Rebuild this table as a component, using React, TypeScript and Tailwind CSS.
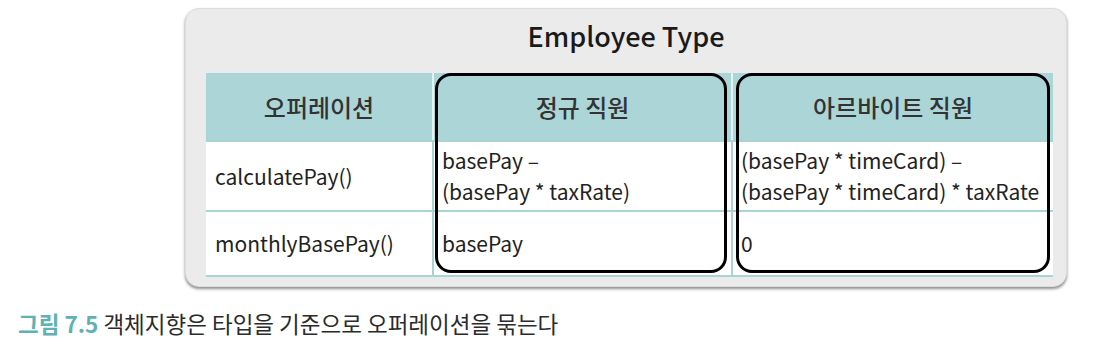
const font = { fontFamily: '"Noto Sans CJK KR", "Noto Sans", sans-serif' };

function App() {
  return (
    <div className="w-[1102px] h-[349px] bg-white overflow-hidden text-[#222]" style={font}>
      <div className="pl-[185px] pt-[8px]">
        <div className="w-[882px] h-[279px] rounded-[14px] bg-[#ebebeb] border border-[#dcdcdc] shadow-[0_2px_3px_rgba(0,0,0,0.45)]">
          <div className="h-[64px] flex items-center justify-center text-[27px] font-medium text-[#1a1a1a] pb-[10px]">
            Employee Type
          </div>
          <div className="relative ml-[20px] w-[847px]">
            <div className="grid grid-cols-[226px_299px_322px] grid-rows-[67px_70px_65px] border-b-2 border-[#a9d3d5] text-[21px] leading-[31px]">
              <div className="bg-[#acd5d7] flex items-center justify-center text-[24px] font-medium text-[#333]">오퍼레이션</div>
              <div className="bg-[#acd5d7] border-l-2 border-[#e4f2f3] flex items-center justify-center text-[24px] font-medium text-[#333]">정규 직원</div>
              <div className="bg-[#acd5d7] border-l-2 border-[#e4f2f3] flex items-center justify-center text-[24px] font-medium text-[#333]">아르바이트 직원</div>

              <div className="bg-white border-t-2 border-[#a9d3d5] flex items-center pl-[9px]">calculatePay()</div>
              <div className="bg-white border-t-2 border-l-2 border-[#a9d3d5] flex flex-col justify-center pl-[8px]">
                <span>basePay –</span>
                <span>(basePay * taxRate)</span>
              </div>
              <div className="bg-white border-t-2 border-l-2 border-[#a9d3d5] flex flex-col justify-center pl-[8px]">
                <span>(basePay * timeCard) –</span>
                <span>(basePay * timeCard) * taxRate</span>
              </div>

              <div className="bg-white border-t-2 border-[#a9d3d5] flex items-center pl-[9px]">monthlyBasePay()</div>
              <div className="bg-white border-t-2 border-l-2 border-[#a9d3d5] flex items-center pl-[8px]">basePay</div>
              <div className="bg-white border-t-2 border-l-2 border-[#a9d3d5] flex items-center pl-[8px]">0</div>
            </div>
            <div className="absolute left-[229px] top-0 w-[292px] h-[200px] border-[3px] border-black rounded-[16px]" />
            <div className="absolute left-[530px] top-0 w-[314px] h-[200px] border-[3px] border-black rounded-[16px]" />
          </div>
        </div>
      </div>
      <div className="pl-[18px] pt-[22px] text-[22.5px] leading-[28px] text-[#2b2b2b]">
        <span className="font-semibold text-[#5fb1b5]">그림 7.5</span> 객체지향은 타입을 기준으로 오퍼레이션을 묶는다
      </div>
    </div>
  );
}

export default App;
